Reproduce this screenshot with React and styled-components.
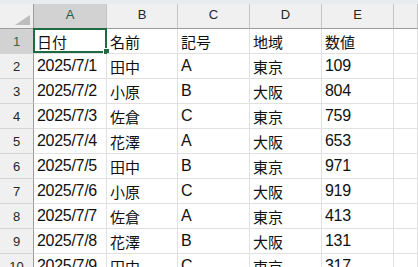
import React from 'react';
import styled, { createGlobalStyle } from 'styled-components';

const GlobalStyle = createGlobalStyle`
  html, body {
    margin: 0;
    padding: 0;
    background: #ffffff;
    overflow: hidden;
  }
`;

const Page = styled.div`
  width: 418px;
  height: 267px;
  overflow: hidden;
  background: #ffffff;
`;

const TopStrip = styled.div`
  height: 4px;
  background: #e7ecf1;
`;

const Sheet = styled.div`
  display: grid;
  grid-template-columns: 34px 73px 71px 72px 72px 72px 1fr;
  grid-auto-rows: 25px;
`;

const Corner = styled.div`
  background: #f0f0f0;
  border-right: 1px solid #9c9c9c;
  border-bottom: 1px solid #9c9c9c;
  display: flex;
  justify-content: flex-end;
  align-items: flex-end;
  padding: 0 3px 3px 0;
`;

const ColHeader = styled.div`
  background: ${({ $active }) => ($active ? '#d2d2d2' : '#f0f0f0')};
  color: ${({ $active }) => ($active ? '#2a5a3e' : '#262626')};
  border-right: 1px solid #c4c4c4;
  border-bottom: 1px solid #9c9c9c;
  font-family: 'Liberation Sans', Arial, sans-serif;
  font-size: 13px;
  display: flex;
  align-items: center;
  justify-content: center;
  padding-bottom: 3px;
`;

const RowHeader = styled.div`
  background: ${({ $active }) => ($active ? '#d2d2d2' : '#f0f0f0')};
  color: ${({ $active }) => ($active ? '#2a6a44' : '#262626')};
  border-right: 1px solid #9c9c9c;
  border-bottom: 1px solid #d4d4d4;
  font-family: 'Liberation Sans', Arial, sans-serif;
  font-size: 13px;
  display: flex;
  align-items: center;
  justify-content: center;
`;

const Cell = styled.div`
  position: relative;
  border-right: 1px solid #e1e1e1;
  border-bottom: 1px solid #e1e1e1;
  color: #111111;
  display: flex;
  align-items: center;
  padding-left: 3px;
  white-space: nowrap;
  font-family: ${({ $cjk }) =>
    $cjk ? "'Noto Sans CJK JP', sans-serif" : "'Liberation Sans', Arial, sans-serif"};
  font-size: ${({ $cjk }) => ($cjk ? '15px' : '16px')};
  letter-spacing: ${({ $cjk }) => ($cjk ? '0' : '-0.3px')};
`;

const Selection = styled.div`
  position: absolute;
  left: -1px;
  top: -1px;
  width: 74px;
  height: 25px;
  box-sizing: border-box;
  border: 2px solid #1e6b41;
  pointer-events: none;
`;

const FillHandle = styled.div`
  position: absolute;
  right: -5px;
  bottom: -4px;
  width: 7px;
  height: 7px;
  box-sizing: border-box;
  background: #1e6b41;
  border: 1px solid #ffffff;
`;

const columns = ['A', 'B', 'C', 'D', 'E', ''];

const rows = [
  ['日付', '名前', '記号', '地域', '数値'],
  ['2025/7/1', '田中', 'A', '東京', '109'],
  ['2025/7/2', '小原', 'B', '大阪', '804'],
  ['2025/7/3', '佐倉', 'C', '東京', '759'],
  ['2025/7/4', '花澤', 'A', '大阪', '653'],
  ['2025/7/5', '田中', 'B', '東京', '971'],
  ['2025/7/6', '小原', 'C', '大阪', '919'],
  ['2025/7/7', '佐倉', 'A', '東京', '413'],
  ['2025/7/8', '花澤', 'B', '大阪', '131'],
  ['2025/7/9', '田中', 'C', '東京', '317'],
];

const isCjk = (text) => /[\u3000-\u9fff]/.test(text);

const App = () => {
  return (
    <Page>
      <GlobalStyle />
      <TopStrip />
      <Sheet>
        <Corner>
          <svg width="15" height="10" viewBox="0 0 15 10">
            <polygon points="15,0 15,10 0,10" fill="#bdbdbd" />
          </svg>
        </Corner>
        {columns.map((col, i) => (
          <ColHeader key={i} $active={col === 'A'}>
            {col}
          </ColHeader>
        ))}
        {rows.map((row, r) => (
          <React.Fragment key={r}>
            <RowHeader $active={r === 0}>{r + 1}</RowHeader>
            {row.map((value, c) => (
              <Cell key={c} $cjk={isCjk(value)}>
                {value}
                {r === 0 && c === 0 && (
                  <Selection>
                    <FillHandle />
                  </Selection>
                )}
              </Cell>
            ))}
            <Cell />
          </React.Fragment>
        ))}
      </Sheet>
    </Page>
  );
};

export default App;
